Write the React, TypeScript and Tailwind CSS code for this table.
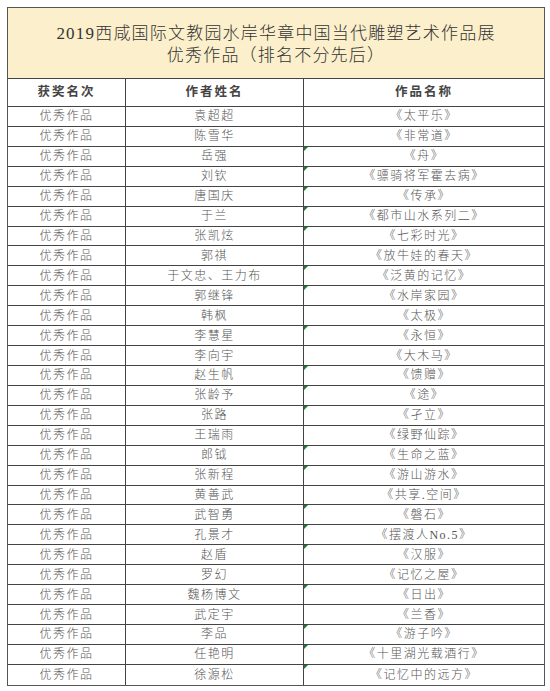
import React from "react";

const rows: [string, string, boolean][] = [
  ["袁超超", "《太平乐》", false],
  ["陈雪华", "《非常道》", false],
  ["岳强", "《舟》", true],
  ["刘钦", "《骠骑将军霍去病》", true],
  ["唐国庆", "《传承》", true],
  ["于兰", "《都市山水系列二》", true],
  ["张凯炫", "《七彩时光》", true],
  ["郭祺", "《放牛娃的春天》", false],
  ["于文忠、王力布", "《泛黄的记忆》", true],
  ["郭继锋", "《水岸家园》", true],
  ["韩枫", "《太极》", false],
  ["李慧星", "《永恒》", true],
  ["李向宇", "《大木马》", false],
  ["赵生帆", "《馈赠》", true],
  ["张龄予", "《途》", true],
  ["张路", "《孑立》", true],
  ["王瑞雨", "《绿野仙踪》", false],
  ["郎钺", "《生命之蓝》", true],
  ["张新程", "《游山游水》", true],
  ["黄善武", "《共享.空间》", false],
  ["武智勇", "《磐石》", true],
  ["孔景才", "《摆渡人No.5》", true],
  ["赵盾", "《汉服》", true],
  ["罗幻", "《记忆之屋》", false],
  ["魏杨博文", "《日出》", true],
  ["武定宇", "《兰香》", false],
  ["李品", "《游子吟》", true],
  ["任艳明", "《十里湖光载酒行》", true],
  ["徐源松", "《记忆中的远方》", true],
];

const font = {
  fontFamily: '"Liberation Serif", "Noto Sans CJK SC", serif',
};

export default function App() {
  return (
    <div className="w-[550px] h-[691px] bg-white pt-[7px] pl-[7px]" style={font}>
      <div className="w-[538px] border border-[#555]">
        <div className="h-[71px] bg-[#fcefcb] border-b border-[#444] flex flex-col items-center justify-center text-[17px] leading-[22px] tracking-[1.2px] font-light text-[#333] pt-[4px]">
          <div>2019西咸国际文教园水岸华章中国当代雕塑艺术作品展</div>
          <div>优秀作品（排名不分先后）</div>
        </div>
        <div className="grid grid-cols-[118px_178px_1fr] h-[28px] border-b border-[#444] text-[12.5px] font-bold tracking-[2px] text-[#444]">
          <div className="flex items-center justify-center border-r border-[#444]">获奖名次</div>
          <div className="flex items-center justify-center border-r border-[#444]">作者姓名</div>
          <div className="flex items-center justify-center">作品名称</div>
        </div>
        {rows.map(([name, work, mark], i) => (
          <div
            key={i}
            className={`grid grid-cols-[118px_178px_1fr] h-[19.93px] text-[12px] tracking-[1.5px] font-light text-[#555] leading-none ${i < rows.length - 1 ? "border-b border-[#444]" : ""}`}
          >
            <div className="flex items-center justify-center border-r border-[#444]">优秀作品</div>
            <div className="flex items-center justify-center border-r border-[#444]">{name}</div>
            <div className="relative flex items-center justify-center">
              {mark && (
                <span className="absolute left-0 top-0 w-0 h-0 border-t-[4px] border-r-[4px] border-t-[#1f7a3a] border-r-transparent" />
              )}
              {work}
            </div>
          </div>
        ))}
      </div>
    </div>
  );
}
